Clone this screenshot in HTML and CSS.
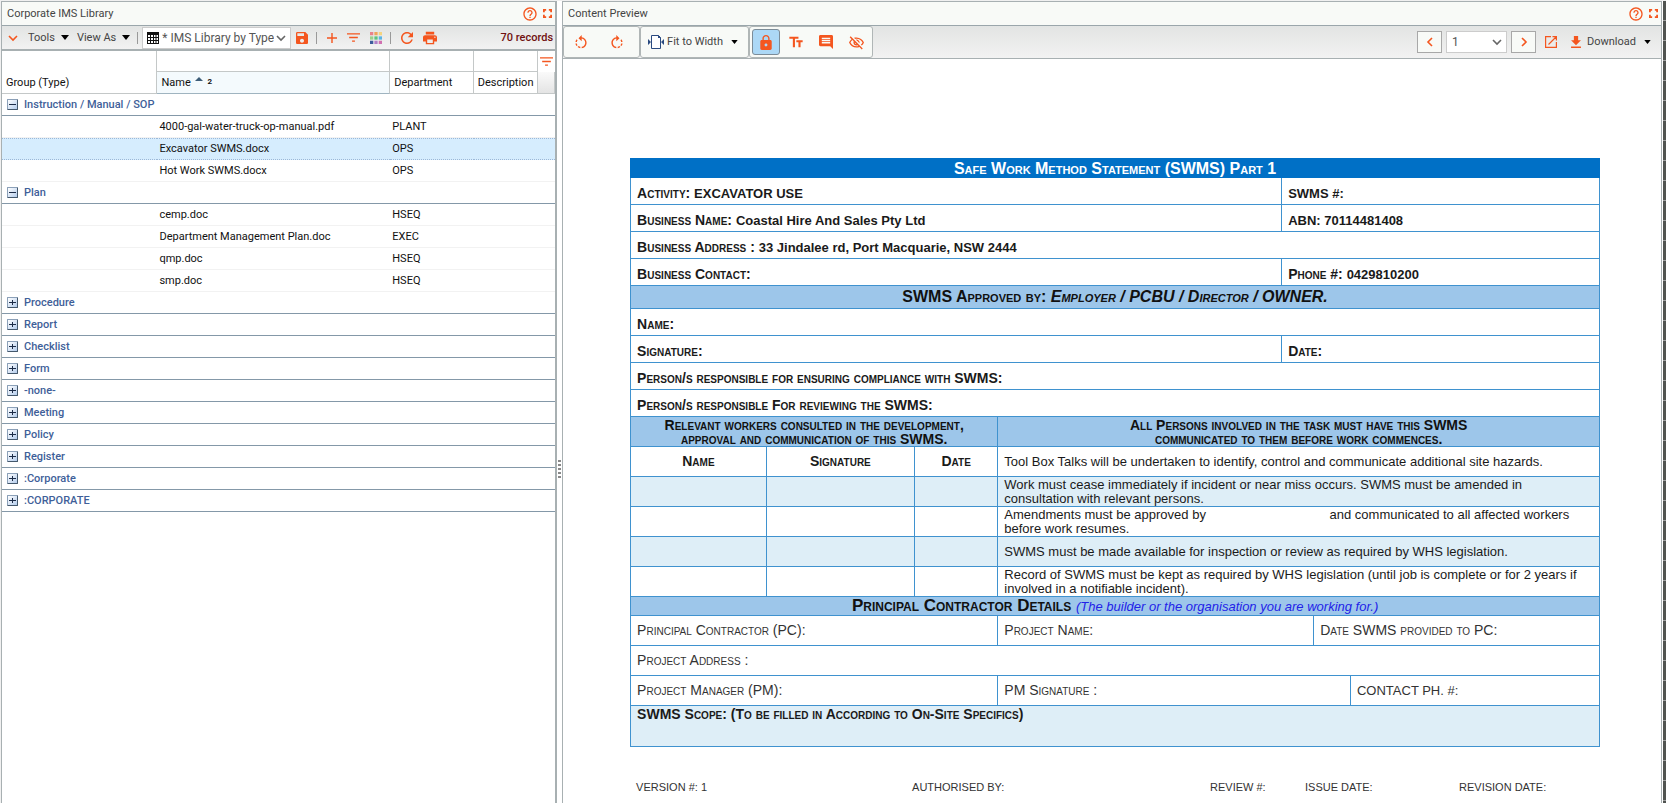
FILE: index.html
```html
<!DOCTYPE html>
<html lang="en">
<head>
<meta charset="utf-8">
<title>Corporate IMS Library</title>
<link rel="stylesheet" href="styles.css">
</head>
<body>
<svg class="sprite" aria-hidden="true">
  <symbol id="help" viewBox="0 0 24 24"><path d="M11 18h2v-2h-2v2zm1-16C6.480 2 2 6.480 2 12s4.480 10 10 10 10-4.480 10-10S17.520 2 12 2zm0 18c-4.410 0-8-3.590-8-8s3.590-8 8-8 8 3.590 8 8-3.590 8-8 8zm0-14c-2.210 0-4 1.790-4 4h2c0-1.100.9-2 2-2s2 .9 2 2c0 2-3 1.750-3 5h2c0-2.250 3-2.500 3-5 0-2.210-1.790-4-4-4z"/></symbol>
  <symbol id="full" viewBox="0 0 10 10"><path d="M0 0h3.500v2H2v1.500H0zM6.500 0H10v3.500H8V2H6.500zM0 6.500h2V8h1.500v2H0zM8 6.500h2V10H6.500V8H8z"/></symbol>
  <symbol id="chev-down" viewBox="0 0 10 10"><path d="M1 3l4 4 4-4" fill="none" stroke="currentColor" stroke-width="1.600"/></symbol>
  <symbol id="chev-left" viewBox="0 0 10 10"><path d="M7 1L3 5l4 4" fill="none" stroke="currentColor" stroke-width="1.600"/></symbol>
  <symbol id="chev-right" viewBox="0 0 10 10"><path d="M3 1l4 4-4 4" fill="none" stroke="currentColor" stroke-width="1.600"/></symbol>
  <symbol id="caret" viewBox="0 0 8 5"><path d="M0 0h8L4 5z"/></symbol>
  <symbol id="grid" viewBox="0 0 12 12"><path d="M0 0h12v12H0z"/><path fill="#fff" d="M1 3h2v2H1zM4 3h2v2H4zM7 3h1.500v2H7zM9.500 3H11v2H9.500zM1 6h2v2H1zM4 6h2v2H4zM7 6h1.500v2H7zM9.500 6H11v2H9.500zM1 9h2v2H1zM4 9h2v2H4zM7 9h1.500v2H7zM9.500 9H11v2H9.500z"/></symbol>
  <symbol id="save" viewBox="3 3 18 18"><path d="M17 3H5c-1.110 0-2 .9-2 2v14c0 1.100.89 2 2 2h14c1.100 0 2-.9 2-2V7l-4-4zm-5 16c-1.660 0-3-1.340-3-3s1.340-3 3-3 3 1.340 3 3-1.340 3-3 3zm3-10H5V5h10v4z"/></symbol>
  <symbol id="add" viewBox="5 5 14 14"><path d="M19 13h-6v6h-2v-6H5v-2h6V5h2v6h6v2z"/></symbol>
  <symbol id="filter" viewBox="3 6 18 12"><path d="M10 18h4v-2h-4v2zM3 6v2h18V6H3zm3 7h12v-2H6v2z"/></symbol>
  <symbol id="refresh" viewBox="4 4 16 16"><path d="M17.650 6.350C16.200 4.900 14.210 4 12 4c-4.420 0-7.990 3.580-7.990 8s3.570 8 7.990 8c3.730 0 6.840-2.550 7.730-6h-2.080c-.82 2.330-3.040 4-5.650 4-3.310 0-6-2.690-6-6s2.690-6 6-6c1.660 0 3.140.69 4.220 1.780L13 11h7V4l-2.350 2.350z"/></symbol>
  <symbol id="print" viewBox="2 3 20 18"><path d="M19 8H5c-1.660 0-3 1.340-3 3v6h4v4h12v-4h4v-6c0-1.660-1.340-3-3-3zm-3 11H8v-5h8v5zm3-7c-.55 0-1-.45-1-1s.45-1 1-1 1 .45 1 1-.45 1-1 1zm-1-9H6v4h12V3z"/></symbol>
  <symbol id="colors" viewBox="0 0 11 11"><path fill="#e8828c" d="M0 0h3v3H0z"/><path fill="#f0a45c" d="M4 0h3v3H4z"/><path fill="#f5d480" d="M8 0h3v3H8z"/><path fill="#9ad08c" d="M0 4h3v3H0z"/><path fill="#5cc480" d="M4 4h3v3H4z"/><path fill="#5ab4e4" d="M8 4h3v3H8z"/><path fill="#3c5c9c" d="M0 8h3v3H0z"/><path fill="#b080c8" d="M4 8h3v3H4z"/><path fill="#d070b0" d="M8 8h3v3H8z"/></symbol>
  <symbol id="rotate" viewBox="2 1 20 20"><path d="M7.110 8.530L5.700 7.110C4.800 8.270 4.240 9.610 4.070 11h2.020c.14-.87.49-1.720 1.020-2.470zM6.090 13H4.070c.17 1.390.72 2.730 1.620 3.890l1.410-1.420c-.52-.75-.87-1.590-1.010-2.470zm1.010 5.320c1.160.9 2.510 1.440 3.900 1.610V17.900c-.87-.15-1.710-.49-2.460-1.030L7.100 18.320zM13 4.070V1L8.450 5.550 13 10V6.090c2.840.48 5 2.940 5 5.910s-2.160 5.430-5 5.910v2.020c3.950-.49 7-3.850 7-7.930s-3.050-7.440-7-7.930z"/></symbol>
  <symbol id="fit" viewBox="0 0 16 14"><path fill="#fff" stroke="#2a4a80" d="M3.500.5h7l2 2v11h-9z"/><path fill="#2a4a80" d="M0 4v6l3-3zM16 4v6l-3-3zM10 0v3h3z"/></symbol>
  <symbol id="lock" viewBox="4 1 16 21"><path d="M18 8h-1V6c0-2.760-2.240-5-5-5S7 3.240 7 6v2H6c-1.100 0-2 .9-2 2v10c0 1.100.9 2 2 2h12c1.100 0 2-.9 2-2V10c0-1.100-.9-2-2-2zm-6 9c-1.100 0-2-.9-2-2s.9-2 2-2 2 .9 2 2-.9 2-2 2zm3.100-9H8.900V6c0-1.710 1.390-3.100 3.100-3.100s3.100 1.390 3.100 3.100v2z"/></symbol>
  <symbol id="text" viewBox="2 3 20 17"><path d="M2.500 4v3h5v12h3V7h5V4h-13zm19 5h-9v3h3v7h3v-7h3V9z"/></symbol>
  <symbol id="comment" viewBox="2 2 20 20"><path d="M21.990 4c0-1.100-.89-2-1.990-2H4c-1.100 0-2 .9-2 2v12c0 1.100.9 2 2 2h14l4 4-.01-18zM18 14H6v-2h12v2zm0-3H6V9h12v2zm0-3H6V6h12v2z"/></symbol>
  <symbol id="eye-off" viewBox="1 1 22 21"><path d="M12 6c3.790 0 7.170 2.130 8.820 5.500-.59 1.220-1.420 2.270-2.410 3.120l1.410 1.410c1.390-1.230 2.490-2.770 3.180-4.530C21.270 7.110 17 4 12 4c-1.270 0-2.490.2-3.640.57l1.650 1.650C10.660 6.090 11.320 6 12 6zm-1.070 1.140L13 9.210c.57.25 1.030.71 1.280 1.280l2.070 2.070c.08-.34.14-.7.14-1.070C16.500 9.010 14.480 7 12 7c-.37 0-.72.05-1.070.14zM2.010 3.870l2.680 2.680C3.060 7.830 1.770 9.530 1 11.500 2.730 15.890 7 19 12 19c1.520 0 2.980-.29 4.320-.82l3.420 3.420 1.410-1.410L3.420 2.450 2.010 3.870zm7.500 7.500l2.610 2.610c-.04.01-.08.02-.12.02-1.380 0-2.500-1.120-2.500-2.500 0-.05.01-.08.01-.13zm-3.400-3.400l1.750 1.750c-.23.55-.36 1.150-.36 1.780 0 2.480 2.020 4.500 4.500 4.500.63 0 1.230-.13 1.770-.36l.98.98c-.88.24-1.800.38-2.750.38-3.790 0-7.170-2.130-8.820-5.500.7-1.430 1.720-2.610 2.930-3.530z"/></symbol>
  <symbol id="open" viewBox="0 0 12 12"><path fill="none" stroke="currentColor" stroke-width="1.200" d="M6 .6H.6v10.800h10.800V6M3.500 8.500L11 1M7.500.6h3.900v3.900"/></symbol>
  <symbol id="download" viewBox="5 3 14 17"><path d="M19 9h-4V3H9v6H5l7 7 7-7zM5 18v2h14v-2H5z"/></symbol>
</svg>

<main class="app">
  <section class="panel library">
    <header class="panel-head">
      <h1 class="panel-title">Corporate IMS Library</h1>
      <button class="icon-btn" aria-label="Help"><svg class="i16"><use href="#help"/></svg></button>
      <button class="icon-btn" aria-label="Full screen"><svg class="i9"><use href="#full"/></svg></button>
    </header>
    <div class="toolbar lib-bar">
      <button class="icon-btn lead" aria-label="Collapse"><svg class="i10"><use href="#chev-down"/></svg></button>
      <button class="menu-btn tools">Tools<svg class="caret"><use href="#caret"/></svg></button>
      <button class="menu-btn">View As<svg class="caret"><use href="#caret"/></svg></button>
      <span class="sep"></span>
      <div class="view-pick">
        <svg class="i12 ink"><use href="#grid"/></svg>
        <select class="pick" aria-label="View"><option>* IMS Library by Type</option></select>
        <svg class="i10 arrow"><use href="#chev-down"/></svg>
      </div>
      <button class="icon-btn gap-l" aria-label="Save"><svg class="i12"><use href="#save"/></svg></button>
      <span class="sep wide"></span>
      <button class="icon-btn" aria-label="Add"><svg class="i10"><use href="#add"/></svg></button>
      <button class="icon-btn gap-m" aria-label="Filter"><svg class="flt"><use href="#filter"/></svg></button>
      <button class="icon-btn gap-m" aria-label="Colours"><svg class="i12"><use href="#colors"/></svg></button>
      <span class="sep wide"></span>
      <button class="icon-btn" aria-label="Refresh"><svg class="i12"><use href="#refresh"/></svg></button>
      <button class="icon-btn gap-m" aria-label="Print"><svg class="i14"><use href="#print"/></svg></button>
      <span class="count">70 records</span>
    </div>
    <table class="grid">
      <colgroup><col class="c-group"><col class="c-name"><col class="c-dept"><col class="c-desc"><col class="c-tool"></colgroup>
      <thead>
        <tr class="filters">
          <td class="blank"></td>
          <td><input class="fil" aria-label="Filter name"></td>
          <td><input class="fil" aria-label="Filter department"></td>
          <td><input class="fil" aria-label="Filter description"></td>
          <td class="f-tool"><button class="icon-btn" aria-label="Apply filter"><svg class="flt"><use href="#filter"/></svg></button></td>
        </tr>
        <tr class="heads">
          <th>Group (Type)</th><th class="sorted">Name <svg class="sort"><path d="M0 4h8L4 0z"/></svg><span class="rank">2</span></th><th>Department</th><th>Description</th><th class="corner"></th>
        </tr>
      </thead>
      <tbody>
        <tr class="group"><th colspan="5"><button class="box" aria-label="Collapse"><svg class="i7"><path d="M0 3h7v1H0z"/></svg></button>Instruction / Manual / SOP</th></tr>
        <tr><td></td><td>4000-gal-water-truck-op-manual.pdf</td><td>PLANT</td><td colspan="2"></td></tr>
        <tr class="sel"><td></td><td>Excavator SWMS.docx</td><td>OPS</td><td colspan="2"></td></tr>
        <tr><td></td><td>Hot Work SWMS.docx</td><td>OPS</td><td colspan="2"></td></tr>
        <tr class="group"><th colspan="5"><button class="box" aria-label="Collapse"><svg class="i7"><path d="M0 3h7v1H0z"/></svg></button>Plan</th></tr>
        <tr><td></td><td>cemp.doc</td><td>HSEQ</td><td colspan="2"></td></tr>
        <tr><td></td><td>Department Management Plan.doc</td><td>EXEC</td><td colspan="2"></td></tr>
        <tr><td></td><td>qmp.doc</td><td>HSEQ</td><td colspan="2"></td></tr>
        <tr><td></td><td>smp.doc</td><td>HSEQ</td><td colspan="2"></td></tr>
        <tr class="group"><th colspan="5"><button class="box" aria-label="Expand"><svg class="i7"><path d="M0 3h3V1h1v2h3v1H4v2H3V4H0z"/></svg></button>Procedure</th></tr>
        <tr class="group"><th colspan="5"><button class="box" aria-label="Expand"><svg class="i7"><path d="M0 3h3V1h1v2h3v1H4v2H3V4H0z"/></svg></button>Report</th></tr>
        <tr class="group"><th colspan="5"><button class="box" aria-label="Expand"><svg class="i7"><path d="M0 3h3V1h1v2h3v1H4v2H3V4H0z"/></svg></button>Checklist</th></tr>
        <tr class="group"><th colspan="5"><button class="box" aria-label="Expand"><svg class="i7"><path d="M0 3h3V1h1v2h3v1H4v2H3V4H0z"/></svg></button>Form</th></tr>
        <tr class="group"><th colspan="5"><button class="box" aria-label="Expand"><svg class="i7"><path d="M0 3h3V1h1v2h3v1H4v2H3V4H0z"/></svg></button>-none-</th></tr>
        <tr class="group"><th colspan="5"><button class="box" aria-label="Expand"><svg class="i7"><path d="M0 3h3V1h1v2h3v1H4v2H3V4H0z"/></svg></button>Meeting</th></tr>
        <tr class="group"><th colspan="5"><button class="box" aria-label="Expand"><svg class="i7"><path d="M0 3h3V1h1v2h3v1H4v2H3V4H0z"/></svg></button>Policy</th></tr>
        <tr class="group"><th colspan="5"><button class="box" aria-label="Expand"><svg class="i7"><path d="M0 3h3V1h1v2h3v1H4v2H3V4H0z"/></svg></button>Register</th></tr>
        <tr class="group"><th colspan="5"><button class="box" aria-label="Expand"><svg class="i7"><path d="M0 3h3V1h1v2h3v1H4v2H3V4H0z"/></svg></button>:Corporate</th></tr>
        <tr class="group"><th colspan="5"><button class="box" aria-label="Expand"><svg class="i7"><path d="M0 3h3V1h1v2h3v1H4v2H3V4H0z"/></svg></button>:CORPORATE</th></tr>
      </tbody>
    </table>
  </section>

  <div class="splitter"><span class="grip"></span></div>

  <section class="panel preview">
    <header class="panel-head">
      <h2 class="panel-title">Content Preview</h2>
      <button class="icon-btn" aria-label="Help"><svg class="i16"><use href="#help"/></svg></button>
      <button class="icon-btn" aria-label="Full screen"><svg class="i9"><use href="#full"/></svg></button>
    </header>
    <div class="toolbar pre-bar">
      <div class="cluster rotates">
        <button class="icon-btn" aria-label="Rotate left"><svg class="i14"><use href="#rotate"/></svg></button>
        <button class="icon-btn" aria-label="Rotate right"><svg class="i14 mirror"><use href="#rotate"/></svg></button>
      </div>
      <div class="cluster fit">
        <button class="menu-btn fit-btn"><svg class="fit-icon"><use href="#fit"/></svg>Fit to Width<svg class="caret small"><use href="#caret"/></svg></button>
      </div>
      <div class="cluster modes">
        <button class="icon-btn mode on" aria-label="Lock"><svg class="lock"><use href="#lock"/></svg></button>
        <button class="icon-btn mode" aria-label="Text"><svg class="i14"><use href="#text"/></svg></button>
        <button class="icon-btn mode" aria-label="Comments"><svg class="i14"><use href="#comment"/></svg></button>
        <button class="icon-btn mode" aria-label="Hide"><svg class="i15"><use href="#eye-off"/></svg></button>
      </div>
      <div class="pager">
        <button class="icon-btn step" aria-label="Previous page"><svg class="i8"><use href="#chev-left"/></svg></button>
        <div class="page-pick"><select class="pick" aria-label="Page"><option>1</option></select><svg class="i10 arrow"><use href="#chev-down"/></svg></div>
        <button class="icon-btn step" aria-label="Next page"><svg class="i8"><use href="#chev-right"/></svg></button>
        <button class="icon-btn open" aria-label="Open in new window"><svg class="i12"><use href="#open"/></svg></button>
        <button class="menu-btn"><svg class="dl"><use href="#download"/></svg>Download<svg class="caret small"><use href="#caret"/></svg></button>
      </div>
    </div>
    <div class="page">
      <table class="doc">
        <colgroup><col class="d1"><col class="d2"><col class="d3"><col class="d4"><col class="d5"><col class="d6"><col class="d7"></colgroup>
        <tr class="title r20"><th colspan="7">Safe Work Method Statement (SWMS) Part 1</th></tr>
        <tr class="caps r27"><td colspan="4">Activity: <span class="plain">EXCAVATOR USE</span></td><td colspan="3"><span class="plain">SWMS #:</span></td></tr>
        <tr class="caps r27"><td colspan="4">Business Name: <span class="plain">Coastal Hire And Sales Pty Ltd</span></td><td colspan="3"><span class="plain">ABN: 70114481408</span></td></tr>
        <tr class="caps r27"><td colspan="7">Business Address : <span class="plain">33 Jindalee rd, Port Macquarie, NSW 2444</span></td></tr>
        <tr class="caps r27"><td colspan="4">Business Contact:</td><td colspan="3">Phone #: <span class="plain">0429810200</span></td></tr>
        <tr class="band big r23"><th colspan="7">SWMS Approved by: <em>Employer / PCBU / Director / OWNER.</em></th></tr>
        <tr class="caps r27"><td colspan="7">Name:</td></tr>
        <tr class="caps r27"><td colspan="4">Signature:</td><td colspan="3">Date:</td></tr>
        <tr class="caps r27"><td colspan="7">Person/s responsible for ensuring compliance with SWMS:</td></tr>
        <tr class="caps r27"><td colspan="7">Person/s responsible For reviewing the SWMS:</td></tr>
        <tr class="band r30"><th colspan="3">Relevant workers consulted in the development,<br>approval and communication of this SWMS.</th><th colspan="4">All Persons involved in the task must have this SWMS<br>communicated to them before work commences.</th></tr>
        <tr class="note r30"><th>Name</th><th>Signature</th><th>Date</th><td colspan="4">Tool Box Talks will be undertaken to identify, control and communicate additional site hazards.</td></tr>
        <tr class="note tint r30"><td></td><td></td><td></td><td colspan="4">Work must cease immediately if incident or near miss occurs. SWMS must be amended in<br>consultation with relevant persons.</td></tr>
        <tr class="note r30"><td></td><td></td><td></td><td colspan="4">Amendments must be approved by <span class="fill-in"></span>and communicated to all affected workers<br>before work resumes.</td></tr>
        <tr class="note tint r30"><td></td><td></td><td></td><td colspan="4">SWMS must be made available for inspection or review as required by WHS legislation.</td></tr>
        <tr class="note r30"><td></td><td></td><td></td><td colspan="4">Record of SWMS must be kept as required by WHS legislation (until job is complete or for 2 years if<br>involved in a notifiable incident).</td></tr>
        <tr class="band contractor r20"><th colspan="7">Principal Contractor Details <em class="hint">(The builder or the organisation you are working for.)</em></th></tr>
        <tr class="light r30"><td colspan="3">Principal Contractor (PC):</td><td colspan="2">Project Name:</td><td colspan="2">Date SWMS provided to PC:</td></tr>
        <tr class="light r30"><td colspan="7">Project Address :</td></tr>
        <tr class="light r30"><td colspan="3">Project Manager (PM):</td><td colspan="3">PM Signature :</td><td><span class="plain">CONTACT PH. #:</span></td></tr>
        <tr class="caps scope tint"><td colspan="7">SWMS Scope: (To be filled in According to On-Site Specifics)</td></tr>
      </table>
      <footer class="doc-foot"><span>VERSION #: 1</span><span>AUTHORISED BY:</span><span>REVIEW #:</span><span>ISSUE DATE:</span><span>REVISION DATE:</span></footer>
    </div>
  </section>
  <div class="edge"></div>
</main>
</body>
</html>
```
FILE: styles.css
```css
* { box-sizing: border-box; }
body { margin: 0; background: #fff; color: #111; font: 11px/16px Roboto, "Liberation Sans", sans-serif; }
button, select, input { font: inherit; color: inherit; }
svg { display: block; fill: currentColor; flex: none; }
.sprite { position: absolute; width: 0; height: 0; }

.app { display: flex; height: 100vh; overflow: hidden; padding-top: 1px; border-left: 1px solid #f0f0f0; background: #f0f0f0; }
.panel { display: flex; flex-direction: column; background: #fff; border: 1px solid #a8b0b2; border-bottom: 0; min-width: 0; }
.library { flex: 0 0 33.4%; border-right: 2px solid #a8b0b2; }
.preview { flex: 1; }
.splitter { flex: 0 0 5px; display: flex; align-items: center; background: #fff; }
.grip { width: 3px; height: 19px; margin-top: 134px; margin-left: 1px; background: repeating-linear-gradient(#888 0 2px, #fff 2px 4px); }
.edge { flex: 0 0 4px; border-left: 1px solid #fff; background: repeating-linear-gradient(#505350 0 19px, #a0a0a0 19px 20px); }

.panel-head { display: flex; align-items: center; gap: 5px; height: 24px; padding: 0 3px 0 5px; background: #f8faf7; border-bottom: 1px solid #9aa6ab; flex: none; }
.panel-title { flex: 1; margin: 0; font-size: 11px; font-weight: 400; color: #444; }
.icon-btn, .menu-btn { display: inline-flex; align-items: center; justify-content: center; border: 0; padding: 0; background: none; }
.icon-btn { color: #f4561f; }
.menu-btn { color: #444; }
.i7 { width: 7px; height: 7px; }
.i8 { width: 10px; height: 10px; }
.i9 { width: 9px; height: 9px; }
.i10 { width: 10px; height: 10px; }
.i12 { width: 12px; height: 12px; }
.i14 { width: 14px; height: 14px; }
.i15 { width: 15px; height: 15px; }
.i16 { width: 16px; height: 16px; }
.flt { width: 13px; height: 9px; }
.ink { color: #111; }
.mirror { transform: scaleX(-1); }
.caret { width: 8px; height: 5px; margin-left: 6px; color: #000; }
.caret.small { width: 7px; height: 4px; margin-left: 8px; }

.toolbar { display: flex; align-items: center; flex: none; background: linear-gradient(#e2e4e3, #f2f2f2); }
.lib-bar { height: 25px; padding-right: 2px; border-bottom: 2px solid #a8b0b2; }
.lead { margin-left: 6px; }
.tools { margin-left: 10px; margin-right: 8px; }
.sep { width: 1px; height: 12px; margin: 0 4px 0 7px; background: #999; }
.sep.wide { margin: 0 10px 0 8px; }
.view-pick { display: flex; align-items: center; height: 22px; width: 149px; padding: 0 4px; gap: 2px; background: #fff; border: 1px solid #ccc; }
.pick { flex: 1; min-width: 0; appearance: none; border: 0; padding: 0 0 0 1px; background: none; color: #555; outline: 0; font-size: 12px; }
.arrow { color: #666; }
.gap-l { margin-left: 5px; }
.gap-m { margin-left: 10px; }
.count { margin-left: auto; color: #701010; font-weight: 500; }

.grid { width: 100%; table-layout: fixed; border-collapse: separate; border-spacing: 0; }
.c-group { width: 28.1%; }
.c-name { width: 42.1%; }
.c-dept { width: 15.1%; }
.c-desc { width: 11.7%; }
.grid td, .grid th { height: 22px; padding: 0 2px; text-align: left; font-weight: 400; white-space: nowrap; border-bottom: 1px solid #f2f2f2; }
.grid thead td, .grid thead th { border-bottom: 1px solid #c4c8c8; border-right: 1px solid #c4c8c8; padding: 0 4px; }
.grid thead .filters td { height: 21px; padding: 0; }
.grid thead .filters .blank { border-bottom: 0; }
.grid thead .filters .f-tool { border: 0; }
.fil { display: block; width: 100%; height: 19px; border: 0; padding: 0 4px; background: none; outline: 0; }
.f-tool .icon-btn { display: flex; width: 100%; }
.grid thead .sorted { background: #f4fafd; border-bottom-color: #9fb4c0; }
.sort { display: inline-block; width: 8px; height: 4px; margin: 0 4px 5px 2px; color: #3c5c78; }
.rank { font-size: 8px; font-weight: 700; vertical-align: 2px; }
.grid thead .corner { background: linear-gradient(#fafafa, #e4e4e4); }
.grid .sel td { background: #d6edfe; border-bottom: 1px dotted #9cb8d8; border-top: 1px dotted #9cb8d8; }
.grid .group th { color: #3f5f99; font-weight: 500; border-bottom-color: #8498a8; padding-left: 5px; }
.box { display: inline-flex; align-items: center; justify-content: center; width: 11px; height: 11px; margin-right: 6px; padding: 0; vertical-align: 0; color: #1c2c48; border: 1px solid #8ba0b8; border-right-color: #44586c; border-bottom-color: #44586c; border-radius: 1px; background: linear-gradient(135deg, #fff, #b4ccec); }

.pre-bar { height: 33px; padding-right: 10px; border-bottom: 1px solid #a8b0b2; align-items: stretch; }
.cluster { display: flex; align-items: center; background: #f8faf7; border: 1px solid #b0b6b6; border-radius: 3px; }
.rotates { width: 77px; gap: 22px; padding-left: 10px; }
.fit { width: 109px; padding-left: 7px; }
.fit-icon { width: 16px; height: 14px; margin-right: 3px; }
.modes { width: 124px; gap: 2px; padding-left: 2px; }
.mode { width: 28px; height: 26px; border: 1px solid transparent; border-radius: 3px; }
.mode.on { background: #acd8f6; border-color: #7c8c98; }
.lock { width: 12px; height: 15px; }
.pager { display: flex; align-items: center; gap: 4px; margin-left: auto; }
.step { width: 25px; height: 22px; background: #f8faf7; border: 1px solid #a8a8a8; }
.page-pick { display: flex; align-items: center; width: 61px; height: 22px; padding: 0 4px; background: #fff; border: 1px solid #ccc; }
.open { margin: 0 10px 0 5px; }
.dl { width: 10px; height: 12px; margin-right: 6px; color: #f4561f; }

.page { padding: 99px 61px 0 67px; font-family: "Liberation Sans", Arial, sans-serif; line-height: 15px; }
.doc { width: 100%; table-layout: fixed; border-collapse: collapse; color: #1a1a1a; }
.doc td, .doc th { border: 1px solid #3f92cf; padding: 0 6px; text-align: left; white-space: nowrap; }
.d1 { width: 14%; }
.d2 { width: 15.3%; }
.d3 { width: 8.6%; }
.d4 { width: 29.3%; }
.d5 { width: 3.3%; }
.d6 { width: 3.8%; }
.r20 { height: 19px; }
.r23 { height: 23px; }
.r27 { height: 27px; }
.r30 { height: 30px; }
.doc .title th { background: #0070c6; border-color: #0070c6; color: #fff; font-size: 16px; text-align: center; font-variant: small-caps; }
.caps td { font-weight: 700; font-size: 14px; font-variant: small-caps; }
.doc .caps td { padding-top: 4px; }
.plain { font-size: 13px; font-variant: normal; }
.doc .band th { background: #9dc6ea; color: #111; text-align: center; font-size: 14px; line-height: 14px; font-variant: small-caps; }
.doc .big th { font-size: 16px; line-height: 18px; }
.doc .contractor th { font-size: 17px; line-height: 17px; }
.hint { color: #2222e8; font-size: 13px; font-weight: 400; font-variant: normal; }
.note td { font-size: 13px; line-height: 14px; }
.doc .note th { font-size: 14px; text-align: center; font-variant: small-caps; }
.tint td { background: #deeef7; }
.fill-in { display: inline-block; width: 120px; }
.light td { font-size: 14px; font-variant: small-caps; color: #333; }
.scope td { height: 41px; vertical-align: top; }
.doc .scope td { padding-top: 1px; }
.doc-foot { display: grid; grid-template-columns: 276fr 298fr 95fr 154fr 141fr; padding-left: 6px; margin-top: 33px; font-size: 11px; color: #333; white-space: nowrap; }
```
